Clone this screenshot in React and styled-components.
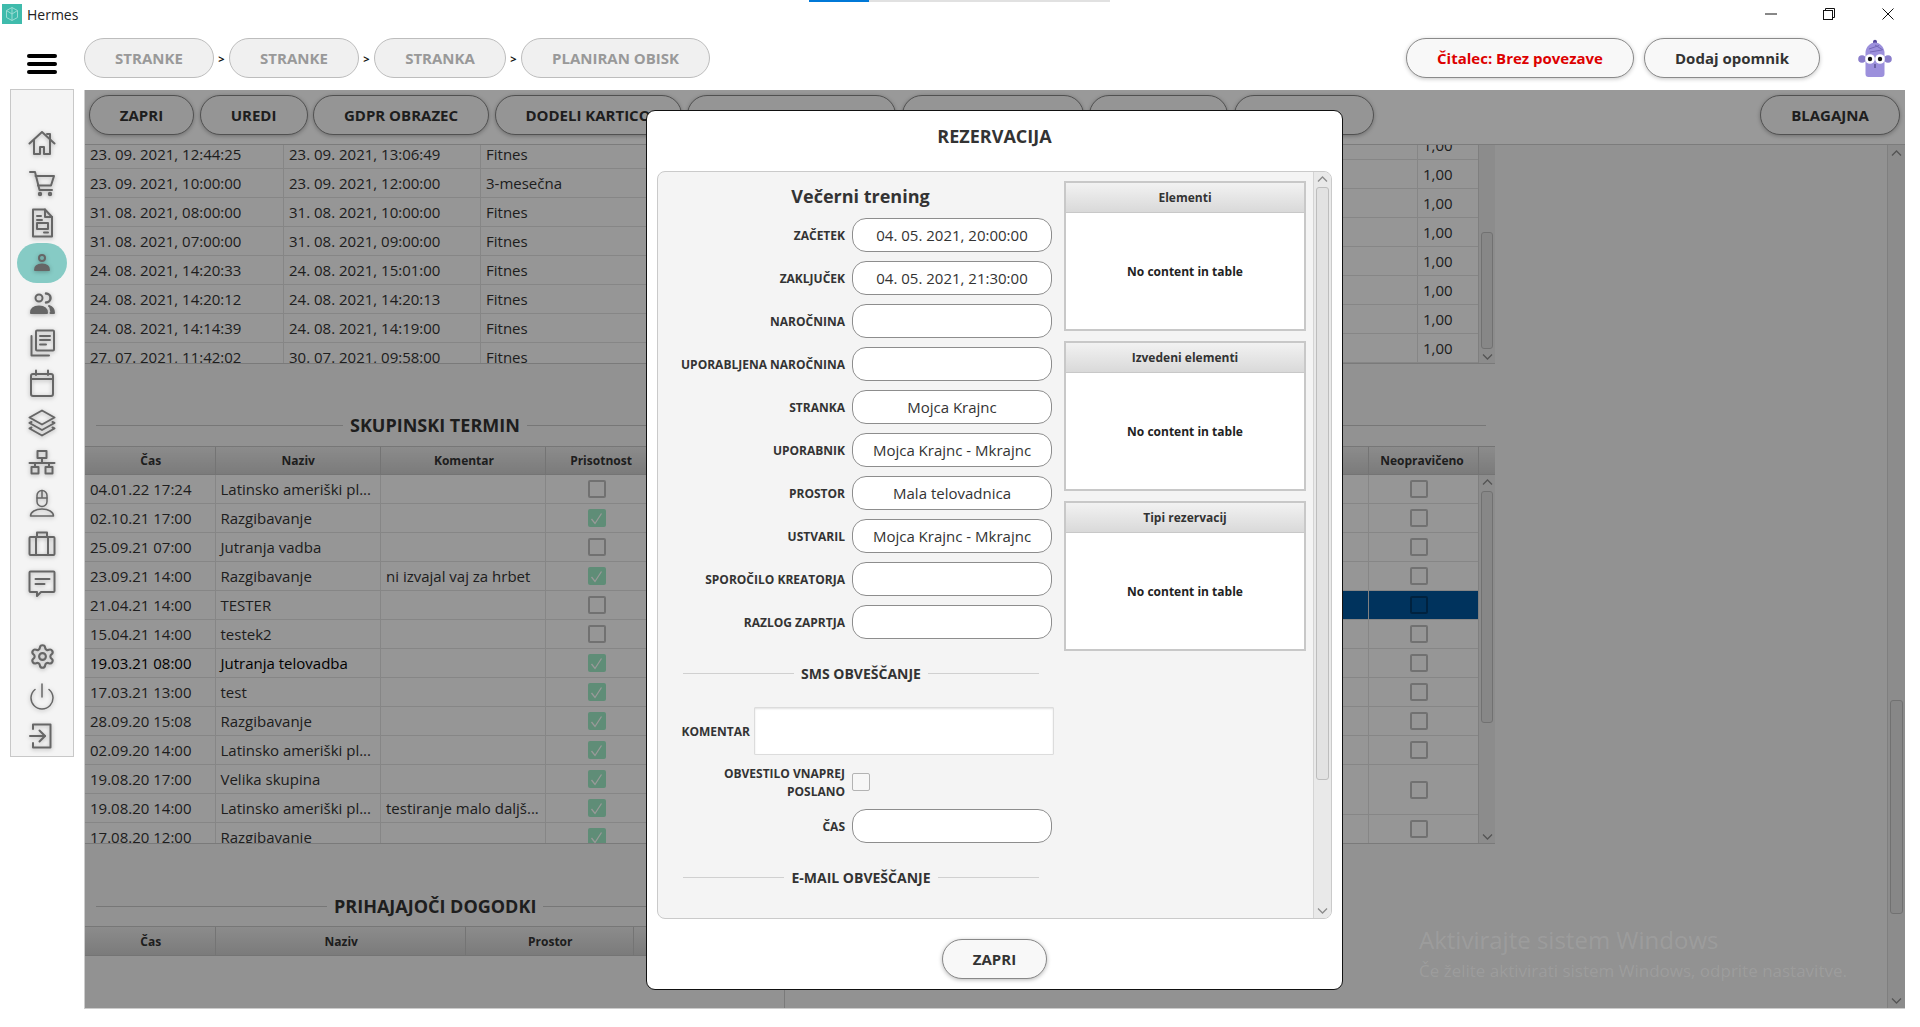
import React from 'react';
import styled, { createGlobalStyle } from 'styled-components';
import { Settings } from 'lucide-react';

const Global = createGlobalStyle`
  html, body { margin: 0; padding: 0; background: #fff; }
  * { box-sizing: border-box; }
  body { font-family: "Open Sans", "Liberation Sans", sans-serif; color: #333; overflow: hidden; }
`;

const Page = styled.div`width:1920px;height:1027px;display:flex;flex-direction:column;background:#fff;overflow:hidden;position:relative;`;

/* ---------- title bar ---------- */
const TitleBar = styled.div`height:30px;display:flex;align-items:flex-start;position:relative;padding:4px 0 0 2px;flex:none;`;
const Loader = styled.div`position:absolute;left:809px;top:0;width:301px;height:2px;background:#e1e1e1;`;
const LoaderFill = styled.div`width:60px;height:100%;background:#0078d7;`;
const AppLogo = styled.svg`width:20px;height:20px;display:block;flex:none;`;
const AppName = styled.span`margin-left:5px;font-size:14px;line-height:22px;color:#222;`;
const WinControls = styled.div`margin-left:auto;display:flex;margin-top:-4px;padding-right:3px;`;
const WinButton = styled.div`width:58.5px;height:28px;display:flex;align-items:center;justify-content:center;`;

/* ---------- header ---------- */
const HeaderRow = styled.div`height:59px;flex:none;display:flex;align-items:flex-start;padding-top:8px;`;
const MenuSlot = styled.div`width:84px;flex:none;padding:16px 0 0 27px;`;
const Burger = styled.div`width:30px;height:20px;display:flex;flex-direction:column;justify-content:space-between;`;
const BurgerBar = styled.span`height:4px;border-radius:2px;background:#000;display:block;`;
const Crumbs = styled.div`display:flex;align-items:center;`;
const Crumb = styled.div`
  height:40px;width:${p => p.$w}px;border-radius:20px;background:#f0f0f0;border:1px solid #bdbdbd;
  display:flex;align-items:center;justify-content:center;font-size:15px;font-weight:700;color:#999;
`;
const CrumbSep = styled.span`width:${p => p.$w || 15}px;text-align:center;font-size:11px;font-weight:700;color:#111;`;
const HeaderRight = styled.div`margin-left:auto;display:flex;align-items:center;`;
const HeaderPill = styled.div`
  height:40px;width:${p => p.$w}px;margin-left:${p => p.$ml}px;border-radius:20px;background:#f8f8f8;border:1px solid #8a8a8a;
  display:flex;align-items:center;justify-content:center;font-size:15px;font-weight:700;color:${p => p.$color};
  box-shadow:0 1px 4px rgba(0,0,0,.22);
`;
const Mascot = styled.svg`width:34px;height:40px;display:block;margin:0 28px 0 38px;`;

/* ---------- body / sidebar ---------- */
const BodyRow = styled.div`flex:1;display:flex;align-items:flex-start;padding-left:10px;min-height:0;`;
const Sidebar = styled.nav`
  width:64px;height:668px;flex:none;background:#f4f4f4;border:1px solid #c8c8c8;
  display:flex;flex-direction:column;align-items:center;padding-top:33px;
`;
const NavItem = styled.div`
  width:50px;height:40px;flex:none;border-radius:20px;display:flex;align-items:center;justify-content:center;
  background:${p => p.$active ? '#86cbc5' : 'transparent'};
  margin-top:${p => p.$gap || 0}px;
`;
const NavSvg = styled.svg`
  width:30px;height:30px;fill:none;stroke:#666;stroke-width:2;stroke-linejoin:round;stroke-linecap:round;
  filter:drop-shadow(0 1px 2px rgba(0,0,0,.28));
`;
const GearIcon = styled(Settings)`color:#666;filter:drop-shadow(0 1px 2px rgba(0,0,0,.28));`;

/* ---------- main pane ---------- */
const Pane = styled.main`
  width:1821px;height:919px;margin:1px 0 0 10px;position:relative;flex:none;display:flex;flex-direction:column;background:#f4f4f4;
  border-left:1px solid #ccc;border-bottom:1px solid #ccc;overflow:hidden;
`;
const Dim = styled.div`position:absolute;inset:0;background:rgba(0,0,0,.4);`;
const Toolbar = styled.div`height:55px;flex:none;display:flex;gap:5.5px;padding:5px 5px 0 4px;background:#fff;border-bottom:1px solid #cfcfcf;overflow:hidden;`;
const ToolButton = styled.div`
  height:40px;flex:none;width:${p => p.$w}px;border-radius:20px;background:#f8f8f8;border:1px solid #888;
  display:flex;align-items:center;justify-content:center;font-size:15px;font-weight:700;color:#333;white-space:nowrap;overflow:hidden;
  box-shadow:0 1px 4px rgba(0,0,0,.28);
  margin-left:${p => p.$push ? 'auto' : '0'};
`;
const PaneMain = styled.div`flex:1;display:flex;min-height:0;`;
const Content = styled.div`flex:1;min-width:0;display:flex;flex-direction:column;`;

const Track = styled.div`
  width:${p => p.$w || 17}px;flex:none;background:#e9e9e9;border-left:1px solid #d4d4d4;display:flex;flex-direction:column;align-items:center;
`;
const Thumb = styled.div`
  width:calc(100% - 4px);height:${p => p.$len}px;margin-top:${p => p.$top}px;flex:none;background:#e2e2e2;border:1px solid #bdbdbd;border-radius:3px;
`;
const ArrowBox = styled.div`
  height:${p => p.$h || 14}px;width:100%;flex:none;display:flex;align-items:center;justify-content:center;
  margin-top:${p => p.$end ? 'auto' : '0'};
`;
const ArrowSvg = styled.svg`width:11px;height:6px;fill:none;stroke:#8c8c8c;stroke-width:1.3;display:block;`;
const Scrollbar = ({ w, upH, downH, top, len }) => (
  <Track $w={w}>
    {upH ? <ArrowBox $h={upH}><ArrowSvg viewBox="0 0 11 6"><path d="M1 5.5 5.5 1 10 5.5" /></ArrowSvg></ArrowBox> : null}
    <Thumb $top={top} $len={len} />
    <ArrowBox $end $h={downH}><ArrowSvg viewBox="0 0 11 6"><path d="M1 .5 5.5 5 10 .5" /></ArrowSvg></ArrowBox>
  </Track>
);

/* ---------- tables ---------- */
const DataBlock = styled.section`display:flex;width:1410px;height:${p => p.$h}px;flex:none;background:#fafafa;overflow:hidden;border-bottom:1px solid #ccc;`;
const ClippedRows = styled.div`margin-top:${p => p.$shift}px;`;
const Row = styled.div`
  height:${p => p.$h || 29}px;flex:none;display:grid;grid-template-columns:${p => p.$cols};border-bottom:1px solid #e0e0e0;
  background:${p => p.$sel ? '#00559b' : 'transparent'};
`;
const Cell = styled.div`
  display:flex;align-items:center;justify-content:${p => p.$center ? 'center' : 'flex-start'};
  padding:${p => p.$center ? `0 ${p.$pr || 0}px 0 0` : '0 5px'};font-size:15px;line-height:1;color:${p => p.$strong ? '#000' : '#333'};
  border-left:${p => p.$first ? '0' : `1px solid ${p.$sel ? '#d5d5d5' : '#e0e0e0'}`};white-space:nowrap;overflow:hidden;
`;
const HeadRow = styled.div`
  height:${p => p.$h || 29}px;flex:none;display:grid;grid-template-columns:${p => p.$cols};
  background:linear-gradient(#e9e9e9,#cdcdcd);border-top:1px solid #c6c6c6;border-bottom:1px solid #c2c2c2;
`;
const HeadCell = styled.div`
  display:flex;align-items:center;justify-content:center;font-size:12px;font-weight:700;color:#333;
  padding:0 ${p => p.$pr || 0}px 0 ${p => p.$pl || 0}px;
  border-left:${p => p.$first ? '0' : '1px solid #c2c2c2'};white-space:nowrap;overflow:hidden;
`;
const SectionTitle = styled.div`
  display:flex;align-items:center;gap:7px;height:24px;flex:none;margin:${p => p.$mt}px 0 ${p => p.$mb}px;width:${p => p.$w}px;padding:0 0 0 11px;
`;
const TitleRule = styled.span`height:1px;background:#c6c6c6;display:block;${p => p.$lead ? `width:${p.$lead}px;flex:none;` : 'flex:1;'}`;
const TitleText = styled.h2`margin:0;font-size:18px;line-height:24px;font-weight:700;color:#333;white-space:nowrap;`;

const Box = styled.span`
  width:18px;height:18px;display:flex;align-items:center;justify-content:center;flex:none;border-radius:2px;
  background:${p => p.$on ? '#9eebc6' : 'transparent'};border:${p => p.$on ? '0' : `2px solid ${p.$sel ? '#003a69' : '#bdbdbd'}`};
`;
const Tick = styled.svg`width:13px;height:13px;fill:none;stroke:#fff;stroke-width:1.3;display:block;`;
const Check = ({ on, sel }) => (
  <Box $on={on} $sel={sel}>{on ? <Tick viewBox="0 0 13 13"><path d="M1.5 7 5 11.5 11.5 1.5" /></Tick> : null}</Box>
);

const GroupLeft = styled.div`flex:1;min-width:0;overflow:hidden;display:flex;flex-direction:column;`;
const GroupRight = styled.div`width:277px;flex:none;display:flex;flex-direction:column;overflow:hidden;`;
const HeadFill = styled.div`width:17px;height:29px;flex:none;background:linear-gradient(#e9e9e9,#cdcdcd);border:1px solid #c2c2c2;border-width:1px 0 1px 1px;`;
const ScrollColumn = styled.div`width:17px;flex:none;display:flex;flex-direction:column;`;
const TrackFill = styled.div`flex:1;min-height:0;display:flex;`;

const EmptyBody = styled.div`flex:1;width:700px;border-right:1px solid #ccc;`;
const BottomTable = styled.div`flex:1;min-height:0;display:flex;flex-direction:column;width:700px;`;

/* ---------- watermark ---------- */
const Watermark = styled.div`position:absolute;right:51px;bottom:25px;width:435px;color:rgba(255,255,255,.11);`;
const WatermarkBig = styled.div`font-size:24px;line-height:32px;white-space:nowrap;`;
const WatermarkSmall = styled.div`font-size:17px;line-height:24px;margin-top:3px;white-space:nowrap;`;

/* ---------- modal ---------- */
const Modal = styled.div`
  position:absolute;left:561px;top:20px;width:697px;height:880px;background:#fff;border:1px solid #111;border-radius:9px;
  display:flex;flex-direction:column;padding:0 10px 0 10px;
`;
const ModalTitle = styled.h1`margin:0;height:60px;flex:none;display:flex;align-items:center;justify-content:center;font-size:18px;font-weight:700;color:#333;padding-bottom:11px;`;
const ModalPanel = styled.div`height:748px;flex:none;display:flex;background:#f4f4f4;border:1px solid #cacaca;border-radius:8px;overflow:hidden;`;
const FormColumn = styled.div`width:405px;flex:none;display:flex;flex-direction:column;padding-top:12px;`;
const FormTitle = styled.h3`margin:0 0 10px;height:24px;font-size:18px;line-height:24px;font-weight:700;color:#333;text-align:center;`;
const Fields = styled.div`display:flex;flex-direction:column;gap:9px;`;
const Field = styled.div`
  display:grid;grid-template-columns:187px 200px;column-gap:7px;align-items:center;margin-top:${p => p.$mt || 0}px;
`;
const FieldLabel = styled.label`font-size:12px;line-height:17.5px;font-weight:700;color:#333;text-align:right;padding-top:2px;`;
const WrappedLabel = styled(FieldLabel)`padding-left:40px;`;
const FieldInput = styled.div`
  height:34px;border-radius:14px;background:#fff;border:1px solid #8d8d8d;display:flex;align-items:center;justify-content:center;
  font-size:15px;color:#333;white-space:nowrap;
`;
const Subhead = styled.div`display:flex;align-items:center;gap:7px;height:24px;margin:${p => p.$mt}px 0 0 25px;width:356px;flex:none;`;
const SubRule = styled.span`flex:1;height:1px;background:#d0d0d0;display:block;`;
const SubText = styled.h4`margin:0;font-size:14px;font-weight:700;color:#333;white-space:nowrap;`;
const CommentRow = styled.div`display:flex;align-items:center;gap:4px;margin-top:22px;`;
const CommentLabel = styled(FieldLabel)`width:92px;flex:none;`;
const CommentBox = styled.div`width:300px;height:48px;background:#fff;border:1px solid #dcdcdc;border-radius:1px;box-shadow:inset 0 1px 2px rgba(0,0,0,.12);`;
const FormCheck = styled.span`width:18px;height:18px;display:block;background:#f7f7f7;border:1px solid #b3b3b3;border-radius:2px;`;

const TablesColumn = styled.div`width:242px;flex:none;margin:9px 0 0 1px;display:flex;flex-direction:column;gap:10px;`;
const MiniTable = styled.div`height:150px;background:#fff;border:2px solid #c8c8c8;display:flex;flex-direction:column;`;
const MiniHead = styled.div`
  height:30px;flex:none;background:linear-gradient(#f2f2f2,#d9d9d9);border-bottom:1px solid #c8c8c8;
  display:flex;align-items:center;justify-content:center;font-size:12px;font-weight:700;color:#333;
`;
const MiniBody = styled.div`flex:1;display:flex;align-items:center;justify-content:center;font-size:12px;font-weight:700;color:#222;`;
const PanelBar = styled.div`margin-left:auto;display:flex;`;
const ModalFooter = styled.div`flex:1;display:flex;justify-content:center;padding-top:20px;`;
const FooterButton = styled(ToolButton)`background:#f8f8f8;`;

/* ---------- data ---------- */
const nav = [
  ['home', <><path d="M2.5 15.5 15 4l12.5 11.5" /><path d="M23 11.5V6h-3" /><path d="M7 12v14h6v-7h4v7h6V12" /></>],
  ['cart', <><path d="M3 4h5l4.5 18H25" /><path d="M8.5 8H27l-3 9.5H11" /><circle cx="13" cy="26" r="1.2" /><circle cx="23" cy="26" r="1.2" /></>],
  ['doc', <><path d="M6 1.5h12l7 7.5v19.500H6z" /><path d="M18 1.500V9h7" /><path d="M10 8h4M10 12h5" /><rect x="10" y="15" width="11" height="6" /><path d="M17 24.500h4" /></>],
  ['person', <><circle cx="15" cy="10" r="3" /><path d="M8 22c0-4 3-5.500 7-5.500s7 1.500 7 5.500z" fill="#666" /></>],
  ['users', <><circle cx="12" cy="10" r="3.500" /><path d="M4 25c0-4.500 3.500-6.500 8-6.500s8 2 8 6.500z" fill="#666" /><path d="M19 5.500a4.500 4.500 0 0 1 0 9" strokeWidth="2.500" /><path d="M22 18c3 1 5 3 5 7h-3.500" fill="#666" /></>],
  ['news', <><rect x="9" y="2.500" width="18" height="20" rx="1" /><path d="M13 8h10M13 12h10M13 16.500h6" /><path d="M4.500 8v19.500H22" /></>],
  ['calendar', <><rect x="4" y="6" width="22" height="22" rx="2" /><path d="M4 11h22" /><path d="M9 2.500V7M21 2.500V7" /></>],
  ['layers', <><path d="M15 2.500 27.500 9.500 15 16.500 2.500 9.500z" /><path d="M4.500 14 2.500 15 15 22l12.500-7-2-1" /><path d="M4.500 19.500 2.500 20.500 15 27.500l12.500-7-2-1" /></>],
  ['network', <><rect x="10.500" y="3" width="9" height="7" /><path d="M15 10v5M2.500 15h25M8 15v4M22 15v4" /><rect x="4.500" y="19" width="7" height="6.500" /><rect x="18.500" y="19" width="7" height="6.500" /></>],
  ['worker', <g strokeWidth="1.500"><path d="M10 7.500a5 5 0 0 1 10 0v6a5 5 0 0 1-10 0z" /><path d="M10 10h10M15 2.500V10" /><path d="M3.500 28c0-4 5-7 11.500-7s11.500 3 11.500 7z" /></g>],
  ['case', <><rect x="2.500" y="9" width="25" height="18" rx="1" /><path d="M10 9V4.500h10V9" /><path d="M9 9v18M21 9v18" /></>],
  ['chat', <><path d="M3.500 3.500h23a1 1 0 0 1 1 1V23a1 1 0 0 1-1 1H14l-4 4v-4H3.500a1 1 0 0 1-1-1V4.500a1 1 0 0 1 1-1z" /><path d="M8.500 11h14M8.500 16h9" /></>],
];
const navBottom = [
  ['power', <g strokeWidth="1.500"><path d="M15 3v13" /><path d="M8 8.500a11 11 0 1 0 14 0" /></g>],
  ['exit', <><path d="M6 8V3.500h17.500v23H6V22" /><path d="M3 15h15" /><path d="M12.500 9.500 18 15l-5.500 5.500" /></>],
];

const rows1 = [
  ['23. 09. 2021, 12:44:25', '23. 09. 2021, 13:06:49', 'Fitnes'],
  ['23. 09. 2021, 10:00:00', '23. 09. 2021, 12:00:00', '3-mesečna'],
  ['31. 08. 2021, 08:00:00', '31. 08. 2021, 10:00:00', 'Fitnes'],
  ['31. 08. 2021, 07:00:00', '31. 08. 2021, 09:00:00', 'Fitnes'],
  ['24. 08. 2021, 14:20:33', '24. 08. 2021, 15:01:00', 'Fitnes'],
  ['24. 08. 2021, 14:20:12', '24. 08. 2021, 14:20:13', 'Fitnes'],
  ['24. 08. 2021, 14:14:39', '24. 08. 2021, 14:19:00', 'Fitnes'],
  ['27. 07. 2021, 11:42:02', '30. 07. 2021, 09:58:00', 'Fitnes'],
];
const rows2 = [
  ['04.01.22 17:24', 'Latinsko ameriški pl...', '', false],
  ['02.10.21 17:00', 'Razgibavanje', '', true],
  ['25.09.21 07:00', 'Jutranja vadba', '', false],
  ['23.09.21 14:00', 'Razgibavanje', 'ni izvajal vaj za hrbet', true],
  ['21.04.21 14:00', 'TESTER', '', false],
  ['15.04.21 14:00', 'testek2', '', false],
  ['19.03.21 08:00', 'Jutranja telovadba', '', true, true],
  ['17.03.21 13:00', 'test', '', true],
  ['28.09.20 15:08', 'Razgibavanje', '', true],
  ['02.09.20 14:00', 'Latinsko ameriški pl...', '', true],
  ['19.08.20 17:00', 'Velika skupina', '', true],
  ['19.08.20 14:00', 'Latinsko ameriški pl...', 'testiranje malo daljš...', true],
  ['17.08.20 12:00', 'Razgibavanje', '', true],
];
const rightRows = [29, 29, 29, 29, 29, 29, 29, 29, 29, 29, 50, 29];
const fields1 = [
  ['ZAČETEK', '04. 05. 2021, 20:00:00'],
  ['ZAKLJUČEK', '04. 05. 2021, 21:30:00'],
  ['NAROČNINA', ''],
  ['UPORABLJENA NAROČNINA', ''],
  ['STRANKA', 'Mojca Krajnc'],
  ['UPORABNIK', 'Mojca Krajnc - Mkrajnc'],
  ['PROSTOR', 'Mala telovadnica'],
  ['USTVARIL', 'Mojca Krajnc - Mkrajnc'],
  ['SPOROČILO KREATORJA', ''],
  ['RAZLOG ZAPRTJA', ''],
];
const COLS1 = '198px 197px 1fr';
const COLS1R = '1fr 61px';
const COLS2 = '129.5px 165.5px 165px 111px 1fr';
const COLS3 = '129.5px 250.5px 167.5px 1fr';
const COLSR = '1fr 110px';

export default function App() {
  return (
    <Page>
      <Global />
      <TitleBar>
        <Loader><LoaderFill /></Loader>
        <AppLogo viewBox="0 0 20 20">
          <rect width="20" height="20" fill="#3fbbac" />
          <path d="M10 3.500 15.500 6.500v7L10 16.500 4.500 13.500v-7zM10 3.500v13M4.500 6.500 10 10l5.500-3.500" fill="none" stroke="#9adcd3" strokeWidth="1" />
        </AppLogo>
        <AppName>Hermes</AppName>
        <WinControls>
          <WinButton><svg width="12" height="12" viewBox="0 0 12 12"><path d="M0 6h12" stroke="#111" strokeWidth="1" /></svg></WinButton>
          <WinButton><svg width="12" height="12" viewBox="0 0 12 12" fill="none" stroke="#111" strokeWidth="1"><rect x=".5" y="2.500" width="9" height="9" /><path d="M2.500 2.500V.5h9v9h-2" /></svg></WinButton>
          <WinButton><svg width="12" height="12" viewBox="0 0 12 12"><path d="M.5.5l11 11M11.500.5l-11 11" stroke="#111" strokeWidth="1" /></svg></WinButton>
        </WinControls>
      </TitleBar>

      <HeaderRow>
        <MenuSlot><Burger><BurgerBar /><BurgerBar /><BurgerBar /></Burger></MenuSlot>
        <Crumbs>
          <Crumb $w={130}>STRANKE</Crumb><CrumbSep>&gt;</CrumbSep>
          <Crumb $w={130}>STRANKE</Crumb><CrumbSep>&gt;</CrumbSep>
          <Crumb $w={132}>STRANKA</Crumb><CrumbSep>&gt;</CrumbSep>
          <Crumb $w={189}>PLANIRAN OBISK</Crumb>
        </Crumbs>
        <HeaderRight>
          <HeaderPill $w={228} $ml={0} $color="#dd0000">Čitalec: Brez povezave</HeaderPill>
          <HeaderPill $w={176} $ml={10} $color="#333">Dodaj opomnik</HeaderPill>
          <Mascot viewBox="0 0 34 40">
            <path d="M15 4c0-3 4-3 4 0v2h-4z" fill="#55489b" />
            <path d="M7.500 14C8 9 12 4.500 17 4.500S26 9 26.500 14v22a3 3 0 0 1-3 3h-13a3 3 0 0 1-3-3z" fill="#9c90dc" />
            <path d="M11 11l10-3.500M12 14l12-2M17 7l8 5" stroke="#7468b8" strokeWidth="1" fill="none" />
            <circle cx="4" cy="21" r="3.800" fill="#8a7dcb" /><circle cx="30" cy="21" r="3.800" fill="#8a7dcb" />
            <circle cx="12" cy="21" r="4.800" fill="#fff" /><circle cx="22" cy="21" r="4.800" fill="#fff" />
            <circle cx="12" cy="21" r="2.200" fill="#111" /><circle cx="22" cy="21" r="2.200" fill="#111" />
            <path d="M17 26v4" stroke="#3d3570" strokeWidth="1" />
          </Mascot>
        </HeaderRight>
      </HeaderRow>

      <BodyRow>
        <Sidebar>
          {nav.map(([k, d]) => (
            <NavItem key={k} $active={k === 'person'}><NavSvg viewBox="0 0 30 30">{d}</NavSvg></NavItem>
          ))}
          <NavItem $gap={33}><GearIcon size={27} strokeWidth={1.9} /></NavItem>
          {navBottom.map(([k, d]) => (
            <NavItem key={k}><NavSvg viewBox="0 0 30 30">{d}</NavSvg></NavItem>
          ))}
        </Sidebar>

        <Pane>
          <Toolbar>
            <ToolButton $w={105}>ZAPRI</ToolButton>
            <ToolButton $w={108}>UREDI</ToolButton>
            <ToolButton $w={176}>GDPR OBRAZEC</ToolButton>
            <ToolButton $w={187}>DODELI KARTICO</ToolButton>
            <ToolButton $w={209} />
            <ToolButton $w={182} />
            <ToolButton $w={139} />
            <ToolButton $w={140} />
            <ToolButton $w={140} $push>BLAGAJNA</ToolButton>
          </Toolbar>
          <PaneMain>
            <Content>
              <DataBlock $h={219}>
                <GroupLeft>
                  <ClippedRows $shift={-5}>
                    {rows1.map((r, i) => (
                      <Row key={i} $cols={COLS1}>
                        <Cell $first>{r[0]}</Cell><Cell>{r[1]}</Cell><Cell>{r[2]}</Cell>
                      </Row>
                    ))}
                  </ClippedRows>
                </GroupLeft>
                <GroupRight>
                  <ClippedRows $shift={-14}>
                    {rows1.map((r, i) => (
                      <Row key={i} $cols={COLS1R}><Cell $first /><Cell>1,00</Cell></Row>
                    ))}
                  </ClippedRows>
                </GroupRight>
                <Scrollbar top={87} len={117} downH={12} />
              </DataBlock>

              <SectionTitle $mt={49} $mb={9} $w={1401}>
                <TitleRule $lead={247} /><TitleText>SKUPINSKI TERMIN</TitleText><TitleRule />
              </SectionTitle>

              <DataBlock $h={398}>
                <GroupLeft>
                  <HeadRow $cols={COLS2}>
                    <HeadCell $first $pl={2}>Čas</HeadCell><HeadCell $pl={1}>Naziv</HeadCell><HeadCell $pl={2}>Komentar</HeadCell><HeadCell>Prisotnost</HeadCell><HeadCell />
                  </HeadRow>
                  {rows2.map((r, i) => (
                    <Row key={i} $cols={COLS2}>
                      <Cell $first $strong={r[4]}>{r[0]}</Cell>
                      <Cell $strong={r[4]}>{r[1]}</Cell>
                      <Cell>{r[2]}</Cell>
                      <Cell $center $pr={9}><Check on={r[3]} /></Cell>
                      <Cell />
                    </Row>
                  ))}
                </GroupLeft>
                <GroupRight>
                  <HeadRow $cols={COLSR}><HeadCell $first /><HeadCell $pr={3}>Neopravičeno</HeadCell></HeadRow>
                  {rightRows.map((h, i) => (
                    <Row key={i} $h={h} $cols={COLSR} $sel={i === 4}>
                      <Cell $first />
                      <Cell $center $pr={9} $sel={i === 4}><Check sel={i === 4} /></Cell>
                    </Row>
                  ))}
                </GroupRight>
                <ScrollColumn>
                  <HeadFill />
                  <TrackFill><Scrollbar upH={14} top={2} len={232} downH={12} /></TrackFill>
                </ScrollColumn>
              </DataBlock>

              <SectionTitle $mt={50} $mb={8} $w={700}>
                <TitleRule $lead={231} /><TitleText>PRIHAJAJOČI DOGODKI</TitleText><TitleRule />
              </SectionTitle>

              <BottomTable>
                <HeadRow $h={30} $cols={COLS3}>
                  <HeadCell $first $pl={2}>Čas</HeadCell><HeadCell $pl={2}>Naziv</HeadCell><HeadCell $pl={2}>Prostor</HeadCell><HeadCell />
                </HeadRow>
                <EmptyBody />
              </BottomTable>
            </Content>
            <Scrollbar w={18} upH={16} top={539} len={214} downH={14} />
          </PaneMain>

          <Dim />

          <Watermark>
            <WatermarkBig>Aktivirajte sistem Windows</WatermarkBig>
            <WatermarkSmall>Če želite aktivirati sistem Windows, odprite nastavitve.</WatermarkSmall>
          </Watermark>

          <Modal>
            <ModalTitle>REZERVACIJA</ModalTitle>
            <ModalPanel>
              <FormColumn>
                <FormTitle>Večerni trening</FormTitle>
                <Fields>
                  {fields1.map(([l, v]) => (
                    <Field key={l}><FieldLabel>{l}</FieldLabel><FieldInput>{v}</FieldInput></Field>
                  ))}
                </Fields>
                <Subhead $mt={22}><SubRule /><SubText>SMS OBVEŠČANJE</SubText><SubRule /></Subhead>
                <CommentRow><CommentLabel>KOMENTAR</CommentLabel><CommentBox /></CommentRow>
                <Field $mt={8}><WrappedLabel>OBVESTILO VNAPREJ POSLANO</WrappedLabel><FormCheck /></Field>
                <Field $mt={9}><FieldLabel>ČAS</FieldLabel><FieldInput /></Field>
                <Subhead $mt={22}><SubRule /><SubText>E-MAIL OBVEŠČANJE</SubText><SubRule /></Subhead>
              </FormColumn>
              <TablesColumn>
                {['Elementi', 'Izvedeni elementi', 'Tipi rezervacij'].map(t => (
                  <MiniTable key={t}><MiniHead>{t}</MiniHead><MiniBody>No content in table</MiniBody></MiniTable>
                ))}
              </TablesColumn>
              <PanelBar><Scrollbar w={18} upH={14} top={1} len={593} downH={14} /></PanelBar>
            </ModalPanel>
            <ModalFooter><FooterButton $w={105}>ZAPRI</FooterButton></ModalFooter>
          </Modal>
        </Pane>
      </BodyRow>
    </Page>
  );
}
